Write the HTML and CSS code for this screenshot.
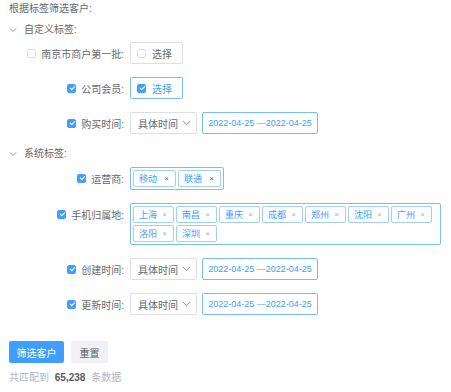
FILE: index.html
```html
<!DOCTYPE html>
<html lang="zh">
  <head>
    <meta charset="UTF-8" />
    <title>标签筛选</title>
    <link rel="stylesheet" href="styles.css">
  </head>
  <body>
    <div class="page">
      <div class="title">根据标签筛选客户:</div>

      <div class="group-head">
        <svg class="arrow" width="8" height="6" viewBox="0 0 8 6"><path d="M1 1.5 L4 4.5 L7 1.5" fill="none" stroke="#909399" stroke-width="1"/></svg>
        自定义标签:
      </div>

      <div class="row">
        <div class="label"><span class="cb"></span><span>南京市商户第一批:</span></div>
        <div class="pick"><span class="cb"></span>选择</div>
      </div>

      <div class="row">
        <div class="label"><span class="cb on"></span><span>公司会员:</span></div>
        <div class="pick active"><span class="cb on"></span>选择</div>
      </div>

      <div class="row">
        <div class="label"><span class="cb on"></span><span>购买时间:</span></div>
        <div class="select">具体时间
          <svg width="9" height="6" viewBox="0 0 9 6"><path d="M1 1 L4.5 4.8 L8 1" fill="none" stroke="#909399" stroke-width="1"/></svg>
        </div>
        <div class="date">2022-04-25 —2022-04-25</div>
      </div>

      <div class="group-head second">
        <svg class="arrow" width="8" height="6" viewBox="0 0 8 6"><path d="M1 1.5 L4 4.5 L7 1.5" fill="none" stroke="#909399" stroke-width="1"/></svg>
        系统标签:
      </div>

      <div class="row">
        <div class="label"><span class="cb on"></span><span>运营商:</span></div>
        <div class="tags">
          <span class="tag big">移动<i>×</i></span>
          <span class="tag big">联通<i>×</i></span>
        </div>
      </div>

      <div class="row">
        <div class="label"><span class="cb on"></span><span>手机归属地:</span></div>
        <div class="tags wide">
          <span class="tag">上海<i>×</i></span>
          <span class="tag">南昌<i>×</i></span>
          <span class="tag">重庆<i>×</i></span>
          <span class="tag">成都<i>×</i></span>
          <span class="tag">郑州<i>×</i></span>
          <span class="tag">沈阳<i>×</i></span>
          <span class="tag">广州<i>×</i></span>
          <span class="tag">洛阳<i>×</i></span>
          <span class="tag">深圳<i>×</i></span>
        </div>
      </div>

      <div class="row">
        <div class="label"><span class="cb on"></span><span>创建时间:</span></div>
        <div class="select">具体时间
          <svg width="9" height="6" viewBox="0 0 9 6"><path d="M1 1 L4.5 4.8 L8 1" fill="none" stroke="#909399" stroke-width="1"/></svg>
        </div>
        <div class="date">2022-04-25 —2022-04-25</div>
      </div>

      <div class="row last">
        <div class="label"><span class="cb on"></span><span>更新时间:</span></div>
        <div class="select">具体时间
          <svg width="9" height="6" viewBox="0 0 9 6"><path d="M1 1 L4.5 4.8 L8 1" fill="none" stroke="#909399" stroke-width="1"/></svg>
        </div>
        <div class="date">2022-04-25 —2022-04-25</div>
      </div>

      <div class="buttons">
        <button class="btn primary">筛选客户</button>
        <button class="btn">重置</button>
      </div>

      <div class="total">共匹配到 <b>65,238</b> 条数据</div>
    </div>
  </body>
</html>
```

FILE: styles.css
```css
body {
  margin: 0;
  padding: 0;
  background-color: #fff;
  font-family: "Liberation Sans", "Noto Sans CJK SC", sans-serif;
  font-size: 10px;
  color: #66686d;
}

.page {
  padding: 2px 0 0 9px;
}

.title {
  line-height: 14px;
}

.group-head {
  display: flex;
  align-items: center;
  line-height: 14px;
  margin-top: 7px;
  margin-bottom: 5px;
}

.group-head.second {
  margin-top: 1px;
  margin-bottom: 6px;
}

.arrow {
  margin: 0 7px 0 0;
}

.row {
  display: flex;
  align-items: flex-start;
  margin-bottom: 13px;
}

.row.last {
  margin-bottom: 0;
}

.label {
  width: 115px;
  height: 22px;
  display: flex;
  align-items: center;
  justify-content: flex-end;
  gap: 5px;
  margin-right: 6px;
  white-space: nowrap;
}

.cb {
  display: inline-block;
  width: 9px;
  height: 9px;
  box-sizing: border-box;
  border: 1px solid #dcdfe6;
  border-radius: 2px;
  background-color: #fff;
  position: relative;
}

.cb.on {
  background-color: #409eff;
  border-color: #409eff;
}

.cb.on::after {
  content: "";
  position: absolute;
  left: 2.5px;
  top: 0.5px;
  width: 2px;
  height: 4px;
  border: solid #fff;
  border-width: 0 1px 1px 0;
  transform: rotate(45deg);
}

.pick {
  width: 53px;
  height: 22px;
  box-sizing: border-box;
  border: 1px solid #dcdfe6;
  border-radius: 2px;
  display: flex;
  align-items: center;
  gap: 6px;
  padding-left: 6px;
}

.pick.active {
  border-color: #79bbff;
  color: #409eff;
}

.select {
  width: 67px;
  height: 22px;
  box-sizing: border-box;
  border: 1px solid #dcdfe6;
  border-radius: 2px;
  display: flex;
  align-items: center;
  justify-content: space-between;
  padding: 0 5px 0 7px;
}

.date {
  width: 116px;
  height: 22px;
  box-sizing: border-box;
  margin-left: 5px;
  border: 1px solid #79bbff;
  border-radius: 2px;
  color: #409eff;
  font-size: 9px;
  display: flex;
  align-items: center;
  justify-content: center;
}

.tags {
  display: flex;
  flex-wrap: wrap;
  gap: 2px;
  padding: 2px;
  box-sizing: border-box;
  border: 1px solid #79bbff;
  border-radius: 2px;
}

.tags.wide {
  width: 311px;
  min-height: 42px;
  align-content: flex-start;
}

.tag {
  display: flex;
  align-items: center;
  justify-content: space-between;
  width: 41px;
  height: 17px;
  box-sizing: border-box;
  padding: 0 6px 0 5px;
  border: 1px solid #a0cfff;
  border-radius: 2px;
  color: #409eff;
  font-size: 9px;
}

.tag.big {
  width: 43px;
}

.tag i {
  font-style: normal;
  color: #a8abb2;
  font-size: 8px;
}

.tag.big i {
  color: #606266;
}

.buttons {
  display: flex;
  gap: 7px;
  margin-top: 26px;
}

.btn {
  height: 22px;
  border: none;
  border-radius: 2px;
  padding: 0;
  width: 37px;
  white-space: nowrap;
  font-family: inherit;
  font-size: 10px;
  background-color: #f0f1f4;
  color: #606266;
}

.btn.primary {
  width: 55px;
  background-color: #409eff;
  color: #fff;
}

.total {
  margin-top: 8px;
  line-height: 14px;
  color: #b4b6bb;
}

.total b {
  color: #555a66;
  margin: 0 3px;
}
```
